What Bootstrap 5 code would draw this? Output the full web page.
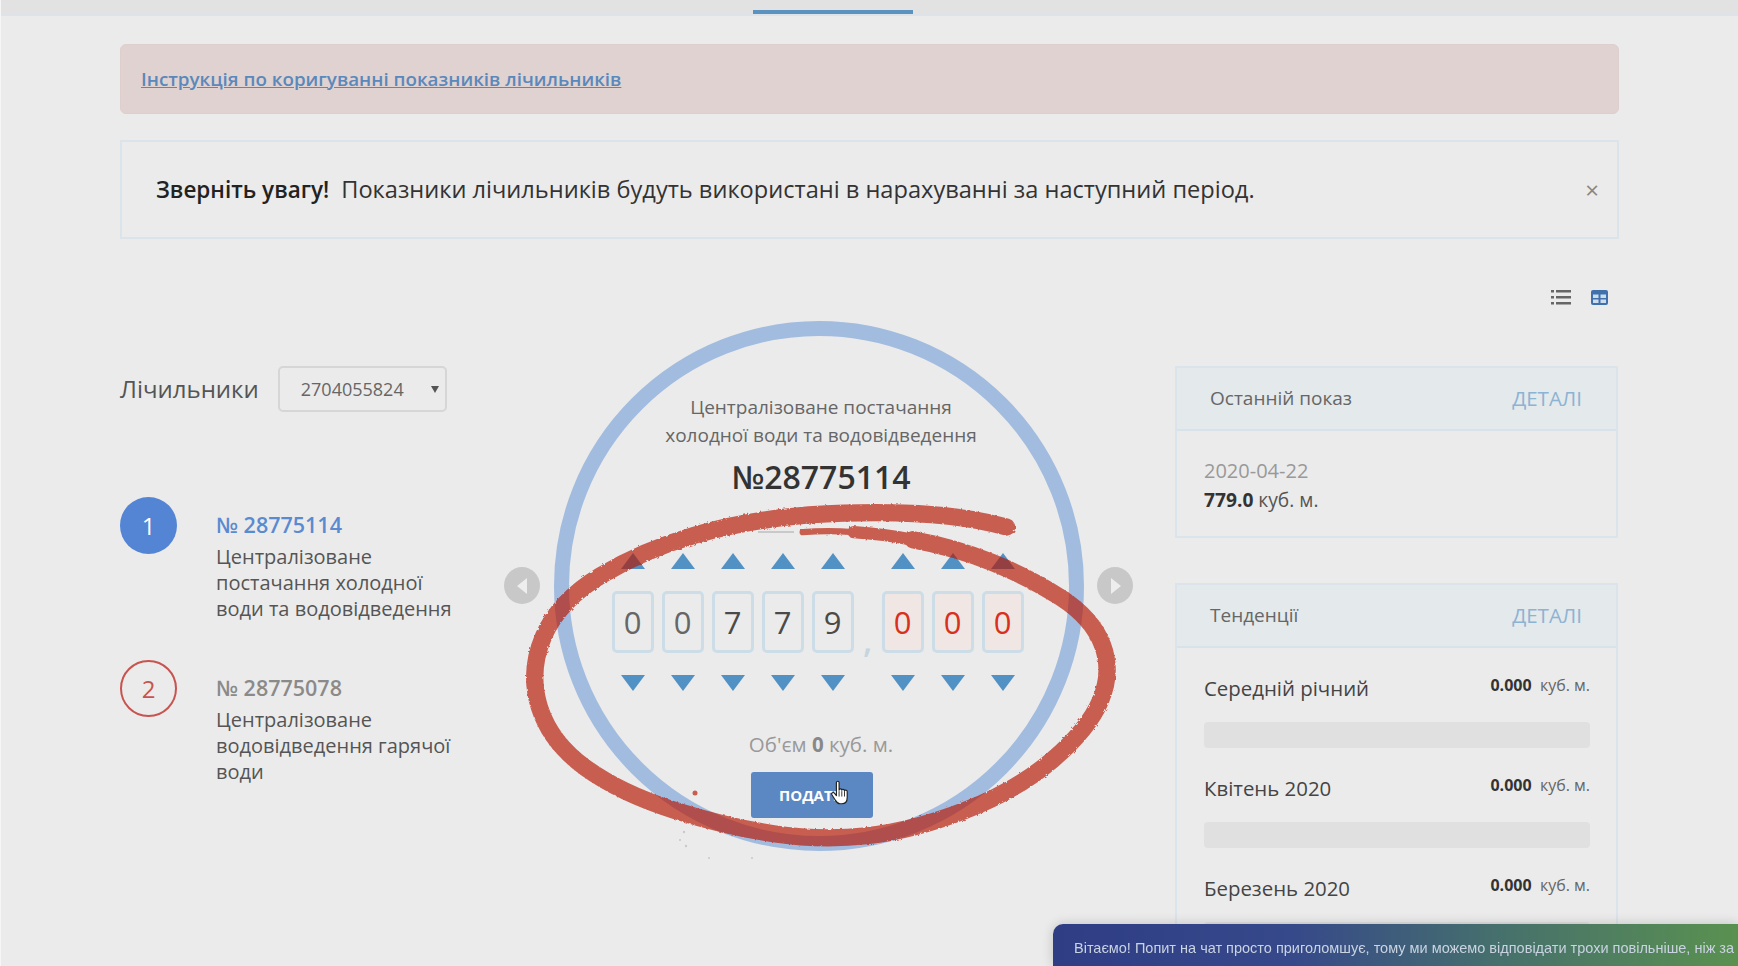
<!DOCTYPE html>
<html lang="uk">
<head>
  <meta charset="UTF-8" />
  <meta name="viewport" content="width=device-width, initial-scale=1" />
  <title>Показники лічильників</title>
  <link href="https://cdn.jsdelivr.net/npm/bootstrap@5.3.0/dist/css/bootstrap.min.css" rel="stylesheet" />
  <style>
    html, body { height: 966px; overflow: hidden; }
    body { background: #ebebeb; font-family: "Open Sans", sans-serif; color: #555; border-left: 1px solid #f6f6f6; }
    .topbar { height: 16px; padding-top: 10px; background: #e2e2e2; border-bottom: 2px solid #dde3e8; }
    .topbar-mark { width: 160px; height: 4px; margin-left: 752px; background: #5b92bf; }
    .page { margin: 0 119px; }
    .alert-doc { height: 70px; margin: 28px 0 26px; padding: 0 20px; background: #e0d2d0; border: 1px solid #ddcfcc; border-radius: 6px; font-size: 18.8px; font-weight: 600; }
    .alert-doc a { color: #5b88bb; }
    .alert-note { height: 99px; margin: 0; padding: 0 18px 0 34px; background: #ebebeb; border: 2px solid #dbe4ea; border-radius: 0; font-size: 23.600px; color: #333; }
    .alert-note strong { font-size: 22.500px; font-weight: 600; color: #222; margin-right: 12px; }
    .note-close { border: 0; background: none; color: #888; font-size: 24px; padding: 0; line-height: 1; }
    .view-toggle { height: 84px; padding: 51px 11px 0 0; gap: 20px; }
    .meters-title { font-size: 24px; color: #555; }
    .meters-select { width: 169px; height: 46px; margin-left: 3px; padding: 0 0 0 21px; background-color: #ebebeb; border: 2px solid #d6d6d6; border-radius: 5px; font-size: 18px; color: #666;
      background-image: url("data:image/svg+xml,%3Csvg xmlns='http://www.w3.org/2000/svg' viewBox='0 0 8 7'%3E%3Cpath d='M0 0h8L4 7z' fill='%23555'/%3E%3C/svg%3E"); background-size: 8px 7px; background-position: right 6px center; }
    .left-col { width: 436px; padding-top: 43px; }
    .meter-item { gap: 39px; }
    .meter-item.first { margin-top: 85px; }
    .meter-item.second { margin-top: 38px; }
    .meter-num { width: 57px; height: 57px; flex: none; border-radius: 50%; font-size: 24px; }
    .meter-num.on { background: #5485d5; color: #fff; }
    .meter-num.off { border: 2px solid #c85450; color: #c85450; }
    .meter-text { padding-top: 14px; }
    .meter-no { font-size: 21.500px; font-weight: 600; line-height: 28px; margin-bottom: 5px; }
    .meter-no.on { color: #5a8ad0; }
    .meter-no.off { color: #8a8a8a; }
    .meter-desc { width: 245px; font-size: 20px; line-height: 26px; color: #555; font-weight: 500; }
    .mid-col { width: 619px; }
    .dial { width: 530px; height: 530px; margin: -2px 0 0 -2px; border: 15px solid #a2bce0; border-radius: 50%; padding: 57px 0 0 4px; }
    .dial-title { font-size: 19px; line-height: 28px; color: #666; }
    .dial-no { font-size: 32px; font-weight: 600; color: #333; line-height: 44px; margin-top: 6px; }
    .digits { margin-top: 54px; gap: 8px; margin-right: 7px; }
    .digit-col { width: 42px; }
    .digit-group-gap { width: 12px; color: #c5d5e0; font-size: 34px; font-weight: 600; line-height: 1; padding-top: 70px; }
    .arr-up, .arr-down { width: 0; height: 0; border-left: 12.5px solid transparent; border-right: 12.5px solid transparent; }
    .arr-up { border-bottom: 16px solid #5291c4; margin-bottom: 22px; }
    .arr-down { border-top: 16px solid #5291c4; margin-top: 22px; }
    .digit-box { width: 42px; height: 62px; border: 3px solid #cddde8; border-radius: 5px; font-size: 31px; color: #4a4a4a; line-height: 1; }
    .digit-box.muted { color: #666; }
    .digit-box.frac { background: #f0e6e4; color: #d9301c; }
    .dial-vol { margin-top: 38px; font-size: 20.500px; line-height: 30px; color: #999; }
    .dial-vol b { color: #888; font-weight: 700; }
    .btn-send { width: 122px; height: 46px; margin: 13px 18px 0 0; padding: 0; background: #5b87c3; border: 0; border-radius: 3px; font-size: 15px; font-weight: 700; color: #fff; }
    .dial-nav { position: absolute; top: 244px; width: 36px; height: 37px; border-radius: 50%; background: #c8c8c8; }
    .dial-nav.prev { left: -52px; }
    .dial-nav.next { left: 541px; }
    .right-col { width: 443px; }
    .info-card { background: #ebebeb; border: 2px solid #dbe4ea; border-radius: 0; margin-top: 43px; }
    .info-card + .info-card { margin-top: 45px; }
    .info-card .card-header { height: 63px; padding: 0 34px 0 33px; background: #e4e9eb; border-bottom: 2px solid #d8e2ea; border-radius: 0; font-size: 19px; color: #666; }
    .info-card .card-header a { color: #8db3d4; text-decoration: none; font-size: 20.500px; }
    .info-card .card-body { padding: 26px 26px 0 27px; }
    .last-date { font-size: 20px; color: #999; line-height: 28px; }
    .last-val { font-size: 19.200px; line-height: 30px; color: #555; padding-bottom: 21px; }
    .last-val b { color: #333; font-weight: 700; }
    .trend-list { margin-top: -2px; }
    .trend-name { font-size: 20.400px; color: #444; line-height: 32px; }
    .trend-val { font-size: 16px; color: #666; line-height: 26px; }
    .trend-val b { color: #333; font-weight: 700; }
    .trend-bar { height: 26px; margin: 18px 0 24px; background: #e0e0e0; border-radius: 4px; }
    .trend-row { height: 32px; }
    .chat-banner { position: fixed; left: 1053px; right: 0; bottom: 0; height: 42px; padding: 8px 0 0 21px; overflow: hidden; white-space: nowrap; background: linear-gradient(90deg, #2f3d85, #36498a 35%, #46706c 65%, #5a9150); border-radius: 10px 0 0 0; box-shadow: 0 0 12px rgba(0,0,0,.18); font-family: "Liberation Sans", sans-serif; font-size: 14.500px; color: #c9d3e2; }
    .scribble { position: absolute; left: 0; top: 0; width: 1738px; height: 966px; opacity: .66; pointer-events: none; }
    .specks { position: absolute; left: 0; top: 0; width: 1738px; height: 966px; pointer-events: none; }
    .hand { position: absolute; left: 831px; top: 780px; width: 18px; height: 25px; pointer-events: none; }
  </style>
</head>
<body>
  <div class="topbar"><div class="topbar-mark"></div></div>

  <div class="page">
    <div class="alert alert-doc d-flex align-items-center">
      <a href="#">Інструкція по коригуванні показників лічильників</a>
    </div>
    <div class="alert alert-note d-flex align-items-center justify-content-between">
      <div><strong>Зверніть увагу!</strong>Показники лічильників будуть використані в нарахуванні за наступний період.</div>
      <button class="note-close" type="button">×</button>
    </div>

    <div class="view-toggle d-flex justify-content-end align-items-start">
      <svg width="20" height="15" viewBox="0 0 20 15" fill="#666"><rect x="0" y="0" width="3" height="2.500"/><rect x="5" y="0" width="15" height="2.500"/><rect x="0" y="6" width="3" height="2.500"/><rect x="5" y="6" width="15" height="2.500"/><rect x="0" y="12" width="3" height="2.500"/><rect x="5" y="12" width="15" height="2.500"/></svg>
      <svg width="17" height="15" viewBox="0 0 17 15"><rect width="17" height="15" rx="2" fill="#3f72ad"/><path d="M2 4.500h5.500v3.500H2zM9.500 4.500H15v3.500H9.500zM2 9.500h5.500V13H2zM9.500 9.500H15V13H9.500z" fill="#cfdcec"/></svg>
    </div>

    <div class="d-flex">
      <div class="left-col">
        <div class="d-flex align-items-center gap-3">
          <span class="meters-title">Лічильники</span>
          <select class="form-select meters-select"><option>2704055824</option></select>
        </div>
        <div class="meter-item first d-flex">
          <div class="meter-num on d-flex align-items-center justify-content-center">1</div>
          <div class="meter-text">
            <div class="meter-no on">№ 28775114</div>
            <div class="meter-desc">Централізоване постачання холодної води та водовідведення</div>
          </div>
        </div>
        <div class="meter-item second d-flex">
          <div class="meter-num off d-flex align-items-center justify-content-center">2</div>
          <div class="meter-text">
            <div class="meter-no off">№ 28775078</div>
            <div class="meter-desc">Централізоване водовідведення гарячої води</div>
          </div>
        </div>
      </div>

      <div class="mid-col position-relative">
        <div class="dial d-flex flex-column align-items-center text-center">
          <div class="dial-title">Централізоване постачання<br />холодної води та водовідведення</div>
          <div class="dial-no">№28775114</div>
          <div class="digits d-flex">
            <div class="digit-col d-flex flex-column align-items-center"><div class="arr-up"></div><div class="digit-box muted d-flex align-items-center justify-content-center">0</div><div class="arr-down"></div></div>
            <div class="digit-col d-flex flex-column align-items-center"><div class="arr-up"></div><div class="digit-box muted d-flex align-items-center justify-content-center">0</div><div class="arr-down"></div></div>
            <div class="digit-col d-flex flex-column align-items-center"><div class="arr-up"></div><div class="digit-box d-flex align-items-center justify-content-center">7</div><div class="arr-down"></div></div>
            <div class="digit-col d-flex flex-column align-items-center"><div class="arr-up"></div><div class="digit-box d-flex align-items-center justify-content-center">7</div><div class="arr-down"></div></div>
            <div class="digit-col d-flex flex-column align-items-center"><div class="arr-up"></div><div class="digit-box d-flex align-items-center justify-content-center">9</div><div class="arr-down"></div></div>
            <div class="digit-group-gap text-center">,</div>
            <div class="digit-col d-flex flex-column align-items-center"><div class="arr-up"></div><div class="digit-box frac d-flex align-items-center justify-content-center">0</div><div class="arr-down"></div></div>
            <div class="digit-col d-flex flex-column align-items-center"><div class="arr-up"></div><div class="digit-box frac d-flex align-items-center justify-content-center">0</div><div class="arr-down"></div></div>
            <div class="digit-col d-flex flex-column align-items-center"><div class="arr-up"></div><div class="digit-box frac d-flex align-items-center justify-content-center">0</div><div class="arr-down"></div></div>
          </div>
          <div class="dial-vol">Об'єм <b>0</b> куб. м.</div>
          <button class="btn btn-primary btn-send" type="button">ПОДАТИ</button>
        </div>
        <div class="dial-nav prev d-flex align-items-center justify-content-center"><svg width="11" height="16" viewBox="0 0 11 16"><path d="M10 0v16L0 8z" fill="#eee"/></svg></div>
        <div class="dial-nav next d-flex align-items-center justify-content-center"><svg width="11" height="16" viewBox="0 0 11 16"><path d="M1 0v16L11 8z" fill="#eee"/></svg></div>
      </div>

      <div class="right-col">
        <div class="card info-card">
          <div class="card-header d-flex align-items-center justify-content-between"><span>Останній показ</span><a href="#">ДЕТАЛІ</a></div>
          <div class="card-body">
            <div class="last-date">2020-04-22</div>
            <div class="last-val"><b>779.0</b> куб. м.</div>
          </div>
        </div>
        <div class="card info-card">
          <div class="card-header d-flex align-items-center justify-content-between"><span>Тенденції</span><a href="#">ДЕТАЛІ</a></div>
          <div class="card-body">
            <div class="trend-list">
              <div class="trend-row d-flex justify-content-between"><span class="trend-name">Середній річний</span><span class="trend-val"><b>0.000</b>&nbsp; куб. м.</span></div>
              <div class="trend-bar"></div>
              <div class="trend-row d-flex justify-content-between"><span class="trend-name">Квітень 2020</span><span class="trend-val"><b>0.000</b>&nbsp; куб. м.</span></div>
              <div class="trend-bar"></div>
              <div class="trend-row d-flex justify-content-between"><span class="trend-name">Березень 2020</span><span class="trend-val"><b>0.000</b>&nbsp; куб. м.</span></div>
              <div class="trend-bar"></div>
            </div>
          </div>
        </div>
      </div>
    </div>
  </div>

  <!-- red marker scribble over the dial -->
  <svg class="scribble" viewBox="0 0 1738 966">
    <defs>
      <filter id="rough" x="-5%" y="-5%" width="110%" height="110%">
        <feTurbulence type="fractalNoise" baseFrequency="0.35" numOctaves="2" seed="4" />
        <feDisplacementMap in="SourceGraphic" scale="3" />
      </filter>
    </defs>
    <g filter="url(#rough)" fill="none" stroke="#b71500" stroke-linecap="round">
      <g transform="translate(823 520) scale(1.02 1.012) translate(-820 -520)">
        <path stroke-width="17" d="M1000 527 Q930 507 806 515 Q745 520 694 535 Q643 550 602 575 Q561 600 546 635 Q531 670 542 705 Q553 740 587.500 765 Q622 790 673.500 806.500 Q725 823 771.500 830 Q818 837 863 832 Q908 827 959 807 Q1010 787 1045 757 Q1080 727 1092 698.500 Q1104 670 1094 643.500 Q1084 617 1053.500 597 Q1023 577 986 562 Q949 547 908 539.500" />
        <path stroke-width="12" d="M908 539.500 Q880 534 850 532" />
        <path stroke-width="6" d="M850 532 Q825 530 800 532" />
      </g>
    </g>
    <circle cx="695" cy="793" r="2.500" fill="#b71500" />
  </svg>
  <svg class="specks" viewBox="0 0 1738 966">
    <g fill="#c9c9c9"><circle cx="684" cy="832" r="1.200" /><circle cx="680" cy="840" r="1" /><circle cx="686" cy="846" r="1.200" /><circle cx="709" cy="858" r="1" /><circle cx="752" cy="858" r="1" /><path d="M758 531h36v2h-36z" /></g>
  </svg>

  <svg class="hand" viewBox="0 0 20 27"><path d="M6 2.500c0-2 3-2 3 0V11c0-2 3-2 3 0 0-1.500 3-1.500 3 .5 0-1 3-1 3 1V19c0 4-2 7-6 7H10c-3 0-4-2-5.500-4.500L1 16c-1-2 1.500-3.500 3-1.500l2 2.500z" fill="#fff" stroke="#222" stroke-width="1.300" stroke-linejoin="round" /><path d="M9 12v6M12 12v6M15 12v6" stroke="#222" stroke-width="1" fill="none" /></svg>

  <div class="chat-banner d-flex align-items-center">Вітаємо! Попит на чат просто приголомшує, тому ми можемо відповідати трохи повільніше, ніж за</div>

  <script src="https://cdn.jsdelivr.net/npm/bootstrap@5.3.0/dist/js/bootstrap.bundle.min.js"></script>
</body>
</html>
